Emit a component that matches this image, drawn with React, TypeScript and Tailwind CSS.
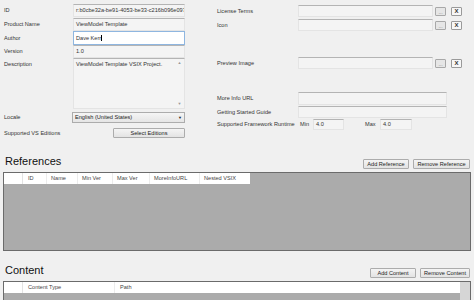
import React from "react";

const Box = ({ w, h, white, children }: { w: string; h: string; white?: boolean; children?: React.ReactNode }) => (
  <div
    className={`${w} ${h} flex items-center pl-[2px] overflow-hidden whitespace-nowrap border ${
      white ? "bg-white border-[#8fb6e0]" : "bg-[#f4f4f4] border-[#e4e4e4] border-t-[#b4b4b4]"
    }`}
  >
    {children}
  </div>
);

const SmallBtns = () => (
  <div className="flex items-center ml-[2px]">
    <div className="w-[11px] h-[9px] border border-[#a8a8a8] bg-[#e6e6e6] rounded-[1px] flex items-end justify-center leading-[5px] text-[#777] text-[5px]">...</div>
    <div className="w-[11px] h-[9px] ml-[5px] border border-[#9a9a9a] bg-[#f7f7f7] rounded-[1px] flex items-center justify-center text-[6px] font-bold text-[#333]">X</div>
  </div>
);

const Btn = ({ w, h, children }: { w: string; h: string; children: React.ReactNode }) => (
  <div className={`${w} ${h} border border-[#acacac] rounded-[1px] bg-gradient-to-b from-[#f4f4f4] to-[#e3e3e3] flex items-center justify-center whitespace-nowrap text-[#222]`}>
    {children}
  </div>
);

export default function App() {
  return (
    <div className="w-[474px] h-[300px] bg-[#f0f0f0] overflow-hidden text-[5.6px] leading-[7px] text-[#333] font-['Liberation_Sans',Arial,sans-serif]">
      {/* top area */}
      <div className="flex h-[150px]">
        {/* left column */}
        <div className="w-[190px] flex flex-col pt-[4px]">
          <div className="flex items-center">
            <span className="w-[73px] pl-[4px]">ID</span>
            <Box w="w-[112px]" h="h-[13px]">r:b0cbe32a-be91-4053-be33-c216b096e097</Box>
          </div>
          <div className="flex items-center mt-[1px]">
            <span className="w-[73px] pl-[4px]">Product Name</span>
            <Box w="w-[112px]" h="h-[13px]">ViewModel Template</Box>
          </div>
          <div className="flex items-center">
            <span className="w-[73px] pl-[4px]">Author</span>
            <Box w="w-[112px]" h="h-[14px]" white>Dave Kerr<span className="inline-block w-[0.5px] h-[6px] bg-black" /></Box>
          </div>
          <div className="flex items-center">
            <span className="w-[73px] pl-[4px]">Version</span>
            <Box w="w-[112px]" h="h-[13px]">1.0</Box>
          </div>
          <div className="flex items-start">
            <span className="w-[73px] pl-[4px] pt-[3px]">Description</span>
            <div className="w-[112px] h-[51px] border border-[#e4e4e4] border-t-[#b4b4b4] bg-[#f4f4f4] flex">
              <div className="flex-1 pl-[2px] pt-[2px] whitespace-nowrap">ViewModel Template VSIX Project.</div>
              <div className="w-[9px] flex flex-col items-center justify-between py-[2px] text-[#999] text-[4px] leading-[4px]">
                <span>▲</span>
                <span>▼</span>
              </div>
            </div>
          </div>
          <div className="flex items-center mt-[3px]">
            <span className="w-[72px] pl-[4px]">Locale</span>
            <div className="w-[113px] h-[11px] border border-[#acacac] bg-gradient-to-b from-[#f5f5f5] to-[#e5e5e5] flex items-center justify-between pl-[2px] pr-[2px] text-[#222]">
              <span>English (United States)</span>
              <span className="text-[4px] text-[#222]">▼</span>
            </div>
          </div>
          <div className="flex items-center mt-[5px]">
            <span className="w-[113px] pl-[4px]">Supported VS Editions</span>
            <Btn w="w-[72px]" h="h-[10px]">Select Editions</Btn>
          </div>
        </div>

        {/* right column */}
        <div className="flex-1 flex flex-col pl-[27px] pt-[5px]">
          <div className="flex items-center">
            <span className="w-[81px]">License Terms</span>
            <Box w="w-[135px]" h="h-[12px]" />
            <SmallBtns />
          </div>
          <div className="flex items-center mt-[2px]">
            <span className="w-[81px]">Icon</span>
            <Box w="w-[135px]" h="h-[12px]" />
            <SmallBtns />
          </div>
          <div className="flex items-center mt-[26px]">
            <span className="w-[81px]">Preview Image</span>
            <Box w="w-[135px]" h="h-[12px]" />
            <SmallBtns />
          </div>
          <div className="flex items-center mt-[23px]">
            <span className="w-[81px]">More Info URL</span>
            <Box w="w-[149px]" h="h-[13px]" />
          </div>
          <div className="flex items-center mt-[1px]">
            <span className="w-[81px]">Getting Started Guide</span>
            <Box w="w-[149px]" h="h-[12px]" />
          </div>
          <div className="flex items-center mt-[1px]">
            <span className="w-[83px] whitespace-nowrap">Supported Framework Runtime</span>
            <span className="w-[13px]">Min</span>
            <Box w="w-[31px]" h="h-[11px]">4.0</Box>
            <span className="w-[15px] ml-[21px]">Max</span>
            <Box w="w-[32px]" h="h-[11px]">4.0</Box>
          </div>
        </div>
      </div>

      {/* References header */}
      <div className="flex items-end h-[22px] pl-[5px] pr-[4px] pb-[3px]">
        <span className="text-[11px] leading-[13px] text-[#111] mb-[1px]">References</span>
        <div className="ml-auto flex gap-[4px]">
          <Btn w="w-[46px]" h="h-[10px]">Add Reference</Btn>
          <Btn w="w-[57px]" h="h-[10px]">Remove Reference</Btn>
        </div>
      </div>

      {/* References grid */}
      <div className="mx-[3px] h-[79px] border border-[#6b6b6b] bg-[#ababab] flex flex-col">
        <div className="flex h-[11px] bg-white w-[246px] items-center text-[#444]">
          <div className="w-[19px] h-full border-r border-[#e3e3e3]" />
          <div className="w-[24px] h-full flex items-center pl-[5px] border-r border-[#ececec]">ID</div>
          <div className="w-[31px] h-full flex items-center pl-[4px] border-r border-[#ececec]">Name</div>
          <div className="w-[35px] h-full flex items-center pl-[4px] border-r border-[#ececec]">Min Ver</div>
          <div className="w-[37px] h-full flex items-center pl-[4px] border-r border-[#ececec]">Max Ver</div>
          <div className="w-[50px] h-full flex items-center pl-[4px] border-r border-[#ececec] whitespace-nowrap">MoreInfoURL</div>
          <div className="w-[50px] h-full flex items-center pl-[4px] whitespace-nowrap">Nested VSIX</div>
        </div>
      </div>

      {/* Content header */}
      <div className="flex items-end h-[30px] pl-[5px] pr-[4px] pb-[3px]">
        <span className="text-[11px] leading-[13px] text-[#111] mb-[1px]">Content</span>
        <div className="ml-auto flex gap-[4px]">
          <Btn w="w-[46px]" h="h-[10px]">Add Content</Btn>
          <Btn w="w-[50px]" h="h-[10px]">Remove Content</Btn>
        </div>
      </div>

      {/* Content grid */}
      <div className="mx-[3px] h-[60px] border border-[#6b6b6b] bg-[#ababab] flex">
        <div className="flex-1 flex flex-col">
          <div className="flex h-[11px] bg-white items-center text-[#444]">
            <div className="w-[19px] h-full border-r border-[#e3e3e3]" />
            <div className="w-[92px] h-full flex items-center pl-[5px] border-r border-[#ececec]">Content Type</div>
            <div className="flex-1 h-full flex items-center pl-[5px]">Path</div>
          </div>
        </div>
        <div className="w-[10px] bg-[#d6d6d6]" />
      </div>
    </div>
  );
}
